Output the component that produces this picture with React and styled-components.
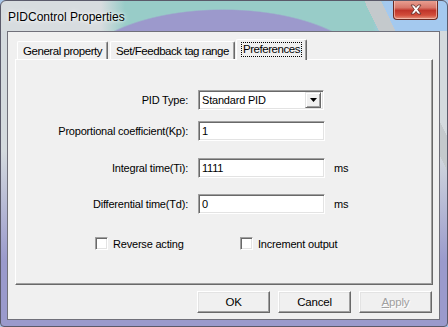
import React from 'react';
import styled, { createGlobalStyle } from 'styled-components';

const GlobalStyle = createGlobalStyle`
  html, body {
    margin: 0;
    padding: 0;
    background: #a8c6e8;
  }
`;

// glass frame: the title bar and the borders share one painted surface
const Window = styled.div`
  width: 448px;
  height: 327px;
  box-sizing: border-box;
  display: flex;
  flex-direction: column;
  padding: 0 7px 6px 6px;
  font-family: 'Liberation Sans', Arial, sans-serif;
  font-size: 11px;
  letter-spacing: -0.2px;
  color: #000;
  border: 1px solid #5a5a6a;
  border-radius: 6px 6px 4px 4px;
  overflow: hidden;
  background-color: #b4cde6;
  background-image:
    radial-gradient(150px 68px at 222px 76px, #9c99cc 98%, rgba(156, 153, 204, 0) 100%),
    linear-gradient(64deg, rgba(196, 201, 204, 0) 469px, #c4c9cc 469px, #c4c9cc 484px, rgba(196, 201, 204, 0) 484px),
    linear-gradient(180deg, rgba(154, 154, 204, 0) 0, rgba(154, 154, 204, 0) 30px, #d4dade 30px, #d4dade 150px, #9a9acc 260px),
    linear-gradient(90deg, #d7dcdf 0, #d7dcdf 100px, #98ccc8 124px, #98ccc8 372px, #a4c9ef 384px);
`;

const TitleBar = styled.div`
  flex: none;
  height: 30px;
  display: flex;
  align-items: center;
  justify-content: space-between;
  padding-left: 1px;
`;

const Title = styled.span`
  font-size: 12px;
  letter-spacing: 0;
  margin-top: 1px;
  text-shadow: 0 0 6px #ffffff, 0 0 3px #ffffff;
`;

const CloseButton = styled.div`
  align-self: flex-start;
  width: 43px;
  height: 19px;
  margin-top: -1px;
  margin-right: 2px;
  display: flex;
  align-items: center;
  justify-content: center;
  border: 1px solid #6b2a22;
  border-top: none;
  border-radius: 0 0 4px 4px;
  background: linear-gradient(180deg, #eba496 0, #d8776a 40%, #c0352a 55%, #d24d3b 80%, #e59580 100%);
  box-shadow: inset 0 0 0 1px rgba(255, 220, 210, 0.55);
`;

const Client = styled.div`
  flex: 1;
  display: flex;
  flex-direction: column;
  background: #f0f0f0;
  border: 1px solid #70707a;
  padding: 6px 6px 6px 7px;
`;

const TabRow = styled.div`
  display: flex;
  align-items: flex-end;
  height: 21px;
  padding-left: 1px;
  position: relative;
  z-index: 1;
`;

const Tab = styled.div`
  height: ${({ active }) => (active ? '21px' : '18px')};
  margin: 0 ${({ active }) => (active ? '0' : '1px')} ${({ active }) => (active ? '-1px' : '0')};
  padding: 0 5px;
  box-sizing: border-box;
  display: flex;
  align-items: center;
  background: #f0f0f0;
  border-top: 1px solid #ffffff;
  border-left: 1px solid #ffffff;
  border-right: 1px solid #696969;
  border-radius: 2px 2px 0 0;
  box-shadow: inset -1px 0 0 #a0a0a0;
  font-size: 11.5px;
  letter-spacing: -0.45px;
  white-space: nowrap;
`;

const FocusText = styled.span`
  outline: 1px dotted #000;
  outline-offset: 0;
  padding: 0 1px 1px;
  margin-top: -2px;
`;

const Panel = styled.div`
  height: 226px;
  box-sizing: border-box;
  border-top: 1px solid #ffffff;
  border-left: 1px solid #ffffff;
  border-right: 1px solid #696969;
  border-bottom: 1px solid #696969;
  box-shadow: inset -1px -1px 0 #a0a0a0;
  padding-top: 30px;
`;

const FormGrid = styled.div`
  display: grid;
  grid-template-columns: 172px 128px auto;
  column-gap: 10px;
  align-items: center;
`;

const Label = styled.label`
  text-align: right;
  letter-spacing: -0.2px;
  margin-top: ${({ top }) => top || 0}px;
`;

const Field = styled.div`
  height: 20px;
  box-sizing: border-box;
  width: ${({ width }) => width || 127}px;
  margin-top: ${({ top }) => top || 0}px;
  background: #ffffff;
  border-top: 1px solid #a0a0a0;
  border-left: 1px solid #a0a0a0;
  border-right: 1px solid #ffffff;
  border-bottom: 1px solid #ffffff;
  box-shadow: inset 1px 1px 0 #696969, inset -1px -1px 0 #e3e3e3;
  display: flex;
  align-items: center;
  padding-left: 3px;
`;

const SelectBox = styled(Field)`
  justify-content: space-between;
  padding-right: 2px;
`;

const DropButton = styled.div`
  width: 16px;
  height: 16px;
  box-sizing: border-box;
  background: #f0f0f0;
  border-top: 1px solid #e3e3e3;
  border-left: 1px solid #e3e3e3;
  border-right: 1px solid #696969;
  border-bottom: 1px solid #696969;
  box-shadow: inset 1px 1px 0 #ffffff, inset -1px -1px 0 #a0a0a0;
  display: flex;
  align-items: center;
  justify-content: center;
`;

const Unit = styled.span`
  margin-left: -2px;
  margin-top: ${({ top }) => top || 0}px;
`;

const CheckRow = styled.div`
  display: flex;
  margin-top: 23px;
  padding-left: 79px;
`;

const CheckItem = styled.label`
  display: flex;
  align-items: center;
  gap: 5px;
  width: ${({ width }) => width}px;
`;

const CheckBox = styled.span`
  width: 13px;
  height: 13px;
  box-sizing: border-box;
  background: #ffffff;
  border-top: 1px solid #a0a0a0;
  border-left: 1px solid #a0a0a0;
  border-right: 1px solid #ffffff;
  border-bottom: 1px solid #ffffff;
  box-shadow: inset 1px 1px 0 #696969, inset -1px -1px 0 #e3e3e3;
`;

const ButtonRow = styled.div`
  display: flex;
  justify-content: flex-end;
  gap: 8px;
  margin-top: 6px;
  padding-right: 1px;
`;

const Button = styled.div`
  width: 73px;
  height: 22px;
  box-sizing: border-box;
  display: flex;
  align-items: center;
  justify-content: center;
  background: #f0f0f0;
  border-top: 1px solid #ffffff;
  border-left: 1px solid #ffffff;
  border-right: 1px solid #696969;
  border-bottom: 1px solid #696969;
  box-shadow: inset -1px -1px 0 #a0a0a0, inset 1px 1px 0 #e3e3e3;
  font-size: 11.5px;
  color: ${({ disabled }) => (disabled ? '#a0a0a0' : '#000')};
  text-shadow: ${({ disabled }) => (disabled ? '1px 1px 0 #ffffff' : 'none')};
`;

const fields = [
  { label: 'Proportional coefficient(Kp):', value: '1', top: 11 },
  { label: 'Integral time(Ti):', value: '1111', unit: 'ms', top: 17 },
  { label: 'Differential time(Td):', value: '0', unit: 'ms', top: 16 },
];

const App = () => (
  <>
    <GlobalStyle />
    <Window>
      <TitleBar>
        <Title>PIDControl Properties</Title>
        <CloseButton>
          <svg width="14" height="11" viewBox="0 0 14 11">
            <path
              d="M2 1h3l2 2.5L9 1h3L8.7 5.5 12 10H9L7 7.5 5 10H2l3.3-4.5z"
              fill="#ffffff"
              stroke="#5a2a26"
              strokeWidth="0.8"
            />
          </svg>
        </CloseButton>
      </TitleBar>
      <Client>
        <TabRow>
          <Tab>General property</Tab>
          <Tab>Set/Feedback tag range</Tab>
          <Tab active>
            <FocusText>Preferences</FocusText>
          </Tab>
        </TabRow>
        <Panel>
          <FormGrid>
            <Label>PID Type:</Label>
            <SelectBox width={126}>
              <span>Standard PID</span>
              <DropButton>
                <svg width="7" height="4" viewBox="0 0 7 4">
                  <path d="M0 0h7L3.5 4z" fill="#000" />
                </svg>
              </DropButton>
            </SelectBox>
            <span />
            {fields.map((f) => (
              <React.Fragment key={f.label}>
                <Label top={f.top}>{f.label}</Label>
                <Field top={f.top}>{f.value}</Field>
                <Unit top={f.top}>{f.unit}</Unit>
              </React.Fragment>
            ))}
          </FormGrid>
          <CheckRow>
            <CheckItem width={145}>
              <CheckBox />
              Reverse acting
            </CheckItem>
            <CheckItem width={150}>
              <CheckBox />
              Increment output
            </CheckItem>
          </CheckRow>
        </Panel>
        <ButtonRow>
          <Button>OK</Button>
          <Button>Cancel</Button>
          <Button disabled>
            <u>A</u>pply
          </Button>
        </ButtonRow>
      </Client>
    </Window>
  </>
);

export default App;
